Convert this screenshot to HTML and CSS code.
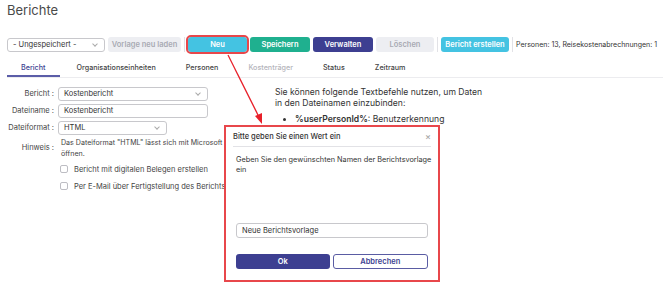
FILE: index.html
```html
<!DOCTYPE html>
<html lang="de">
<head>
    <meta charset="UTF-8">
    <meta name="viewport" content="width=device-width, initial-scale=1.0">
    <title>Berichte</title>
    <link rel="stylesheet" href="styles.css">
</head>
<body>
    <div class="page">
        <h1 class="title">Berichte</h1>

        <div class="toolbar">
            <div class="select select-template">- Ungespeichert -<span class="chev"></span></div>
            <button class="btn btn-light">Vorlage neu laden</button>
            <span class="sep"></span>
            <button class="btn btn-cyan btn-marked">Neu</button>
            <button class="btn btn-green">Speichern</button>
            <button class="btn btn-purple">Verwalten</button>
            <button class="btn btn-light btn-delete">Löschen</button>
            <span class="sep"></span>
            <button class="btn btn-cyan btn-create">Bericht erstellen</button>
            <span class="sep"></span>
            <span class="stats">Personen: 13, Reisekostenabrechnungen: 1</span>
        </div>

        <div class="tabs">
            <div class="tab active">Bericht</div>
            <div class="tab">Organisationseinheiten</div>
            <div class="tab">Personen</div>
            <div class="tab disabled">Kostenträger</div>
            <div class="tab">Status</div>
            <div class="tab">Zeitraum</div>
        </div>

        <div class="content">
            <div class="form">
                <label class="lbl">Bericht :</label>
                <div class="select field-wide">Kostenbericht<span class="chev"></span></div>

                <label class="lbl">Dateiname :</label>
                <div class="input field-wide">Kostenbericht</div>

                <label class="lbl">Dateiformat :</label>
                <div class="select field-small">HTML<span class="chev"></span></div>

                <label class="lbl lbl-hint">Hinweis :</label>
                <div class="hint">Das Dateiformat "HTML" lässt sich mit Microsoft Excel öffnen.</div>

                <span></span>
                <div class="check"><span class="box"></span>Bericht mit digitalen Belegen erstellen</div>

                <span></span>
                <div class="check"><span class="box"></span>Per E-Mail über Fertigstellung des Berichts informieren</div>
            </div>

            <div class="help">
                <p>Sie können folgende Textbefehle nutzen, um Daten in den Dateinamen einzubinden:</p>
                <ul>
                    <li><b>%userPersonId%</b>: Benutzerkennung</li>
                    <li><b>%dateToday%</b>: Aktuelles Datum</li>
                </ul>
            </div>
        </div>
    </div>

    <div class="dialog">
        <div class="dialog-head">
            <span>Bitte geben Sie einen Wert ein</span>
            <span class="close">×</span>
        </div>
        <div class="dialog-body">Geben Sie den gewünschten Namen der Berichtsvorlage ein</div>
        <div class="input dialog-input">Neue Berichtsvorlage</div>
        <div class="dialog-actions">
            <button class="btn btn-purple">Ok</button>
            <button class="btn btn-outline">Abbrechen</button>
        </div>
    </div>

    <svg class="arrow" width="670" height="287" viewBox="0 0 670 287">
        <line x1="228" y1="55" x2="259" y2="117" stroke="#e8202a" stroke-width="1.3"/>
        <polygon points="262,124 255,116 262,113" fill="#e8202a"/>
    </svg>
</body>
</html>
```

FILE: styles.css
```css
body {
    margin: 0;
    font-family: Inter, "Liberation Sans", sans-serif;
    font-size: 7.5px;
    color: #444;
    background: #fff;
}
.page {
    padding: 0 7px;
}
.title {
    margin: 0;
    padding-top: 2px;
    font-size: 13px;
    font-weight: 400;
    line-height: 17px;
    color: #4a4a4a;
}
.toolbar {
    display: flex;
    align-items: center;
    gap: 3px;
    margin-top: 18px;
    height: 15px;
}
.select, .input {
    position: relative;
    box-sizing: border-box;
    height: 14px;
    line-height: 12px;
    padding: 0 5px;
    border: 1px solid #c8c8cc;
    border-radius: 3px;
    background: #fff;
    color: #333;
}
.chev {
    position: absolute;
    right: 7px;
    top: 3px;
    width: 3px;
    height: 3px;
    border-right: 1px solid #aaa;
    border-bottom: 1px solid #aaa;
    transform: rotate(45deg);
}
.select-template {
    width: 98px;
}
.btn {
    box-sizing: border-box;
    height: 15px;
    padding: 0;
    border: none;
    border-radius: 3px;
    font-family: inherit;
    font-size: 7.5px;
    font-weight: 600;
    color: #fff;
}
.toolbar .btn {
    width: 60px;
}
.btn-light {
    background: #edeef2;
    color: #a8aab3;
}
.toolbar .btn-light {
    width: 73px;
}
.toolbar .btn-delete {
    width: 58px;
}
.btn-cyan {
    background: #44c3e2;
}
.btn-green {
    background: #1fb08f;
}
.btn-purple {
    background: #3d3f91;
}
.btn-outline {
    background: #fff;
    color: #3d3f91;
    border: 1px solid #5a5ca3;
}
.toolbar .btn-marked {
    width: 59px;
    outline: 2px solid #e8474b;
}
.toolbar .btn-create {
    width: 68px;
}
.sep {
    width: 1px;
    height: 15px;
    background: #e2e2e6;
}
.stats {
    color: #333;
    font-size: 7px;
    white-space: nowrap;
}
.tabs {
    display: flex;
    margin-top: 7px;
    height: 18px;
    border-bottom: 1px solid #ececef;
}
.tab {
    padding: 4px 15px 0;
    color: #444;
    font-size: 7.2px;
    font-weight: 500;
}
.tab.active {
    padding: 4px 14px 0;
    color: #3d3f91;
    border-bottom: 2px solid #5b5da8;
}
.tab.active + .tab {
    padding-left: 17px;
}
.tab.disabled {
    color: #b4b4bb;
}
.content {
    display: flex;
    padding-top: 9px;
}
.form {
    display: grid;
    grid-template-columns: 47px 210px;
    column-gap: 4px;
    row-gap: 3px;
    width: 268px;
}
.lbl {
    text-align: right;
    line-height: 14px;
    color: #444;
}
.lbl-hint {
    padding-top: 3px;
}
.field-wide {
    width: 150px;
}
.field-small {
    width: 109px;
}
.hint {
    margin-top: -1px;
    padding-left: 3px;
    font-size: 7.1px;
    line-height: 11px;
}
.check {
    display: flex;
    align-items: center;
    gap: 6px;
    padding-left: 2px;
    height: 14px;
    white-space: nowrap;
}
.box {
    box-sizing: border-box;
    width: 8px;
    height: 8px;
    border: 1px solid #bdbdc3;
    border-radius: 2px;
}
.help {
    font-size: 8.6px;
    line-height: 11px;
    color: #333;
}
.help p {
    margin: 0 0 5px;
    width: 212px;
}
.help ul {
    margin: 0;
    padding-left: 20px;
}
.help li {
    margin-bottom: 1px;
}
.help b {
    font-weight: 600;
}
.dialog {
    position: absolute;
    left: 226px;
    top: 127px;
    box-sizing: border-box;
    width: 212px;
    height: 153px;
    padding: 0 10px;
    background: #fff;
    outline: 2px solid #e8474b;
}
.dialog-head {
    display: flex;
    justify-content: space-between;
    align-items: center;
    height: 19px;
    margin: 0 -3px;
    padding: 0;
    border-bottom: 1px solid #e2e2e6;
    color: #333;
    font-weight: 500;
}
.close {
    color: #aaa;
    font-size: 9px;
}
.dialog-body {
    margin-top: 8px;
    margin-right: -4px;
    height: 68px;
    font-size: 7.3px;
    line-height: 10px;
    color: #333;
}
.dialog-input {
    height: 15px;
    line-height: 13px;
}
.dialog-actions {
    display: flex;
    gap: 3px;
    margin-top: 16px;
}
.dialog-actions .btn {
    flex: 1;
}
.arrow {
    position: absolute;
    left: 0;
    top: 0;
    pointer-events: none;
}
```
